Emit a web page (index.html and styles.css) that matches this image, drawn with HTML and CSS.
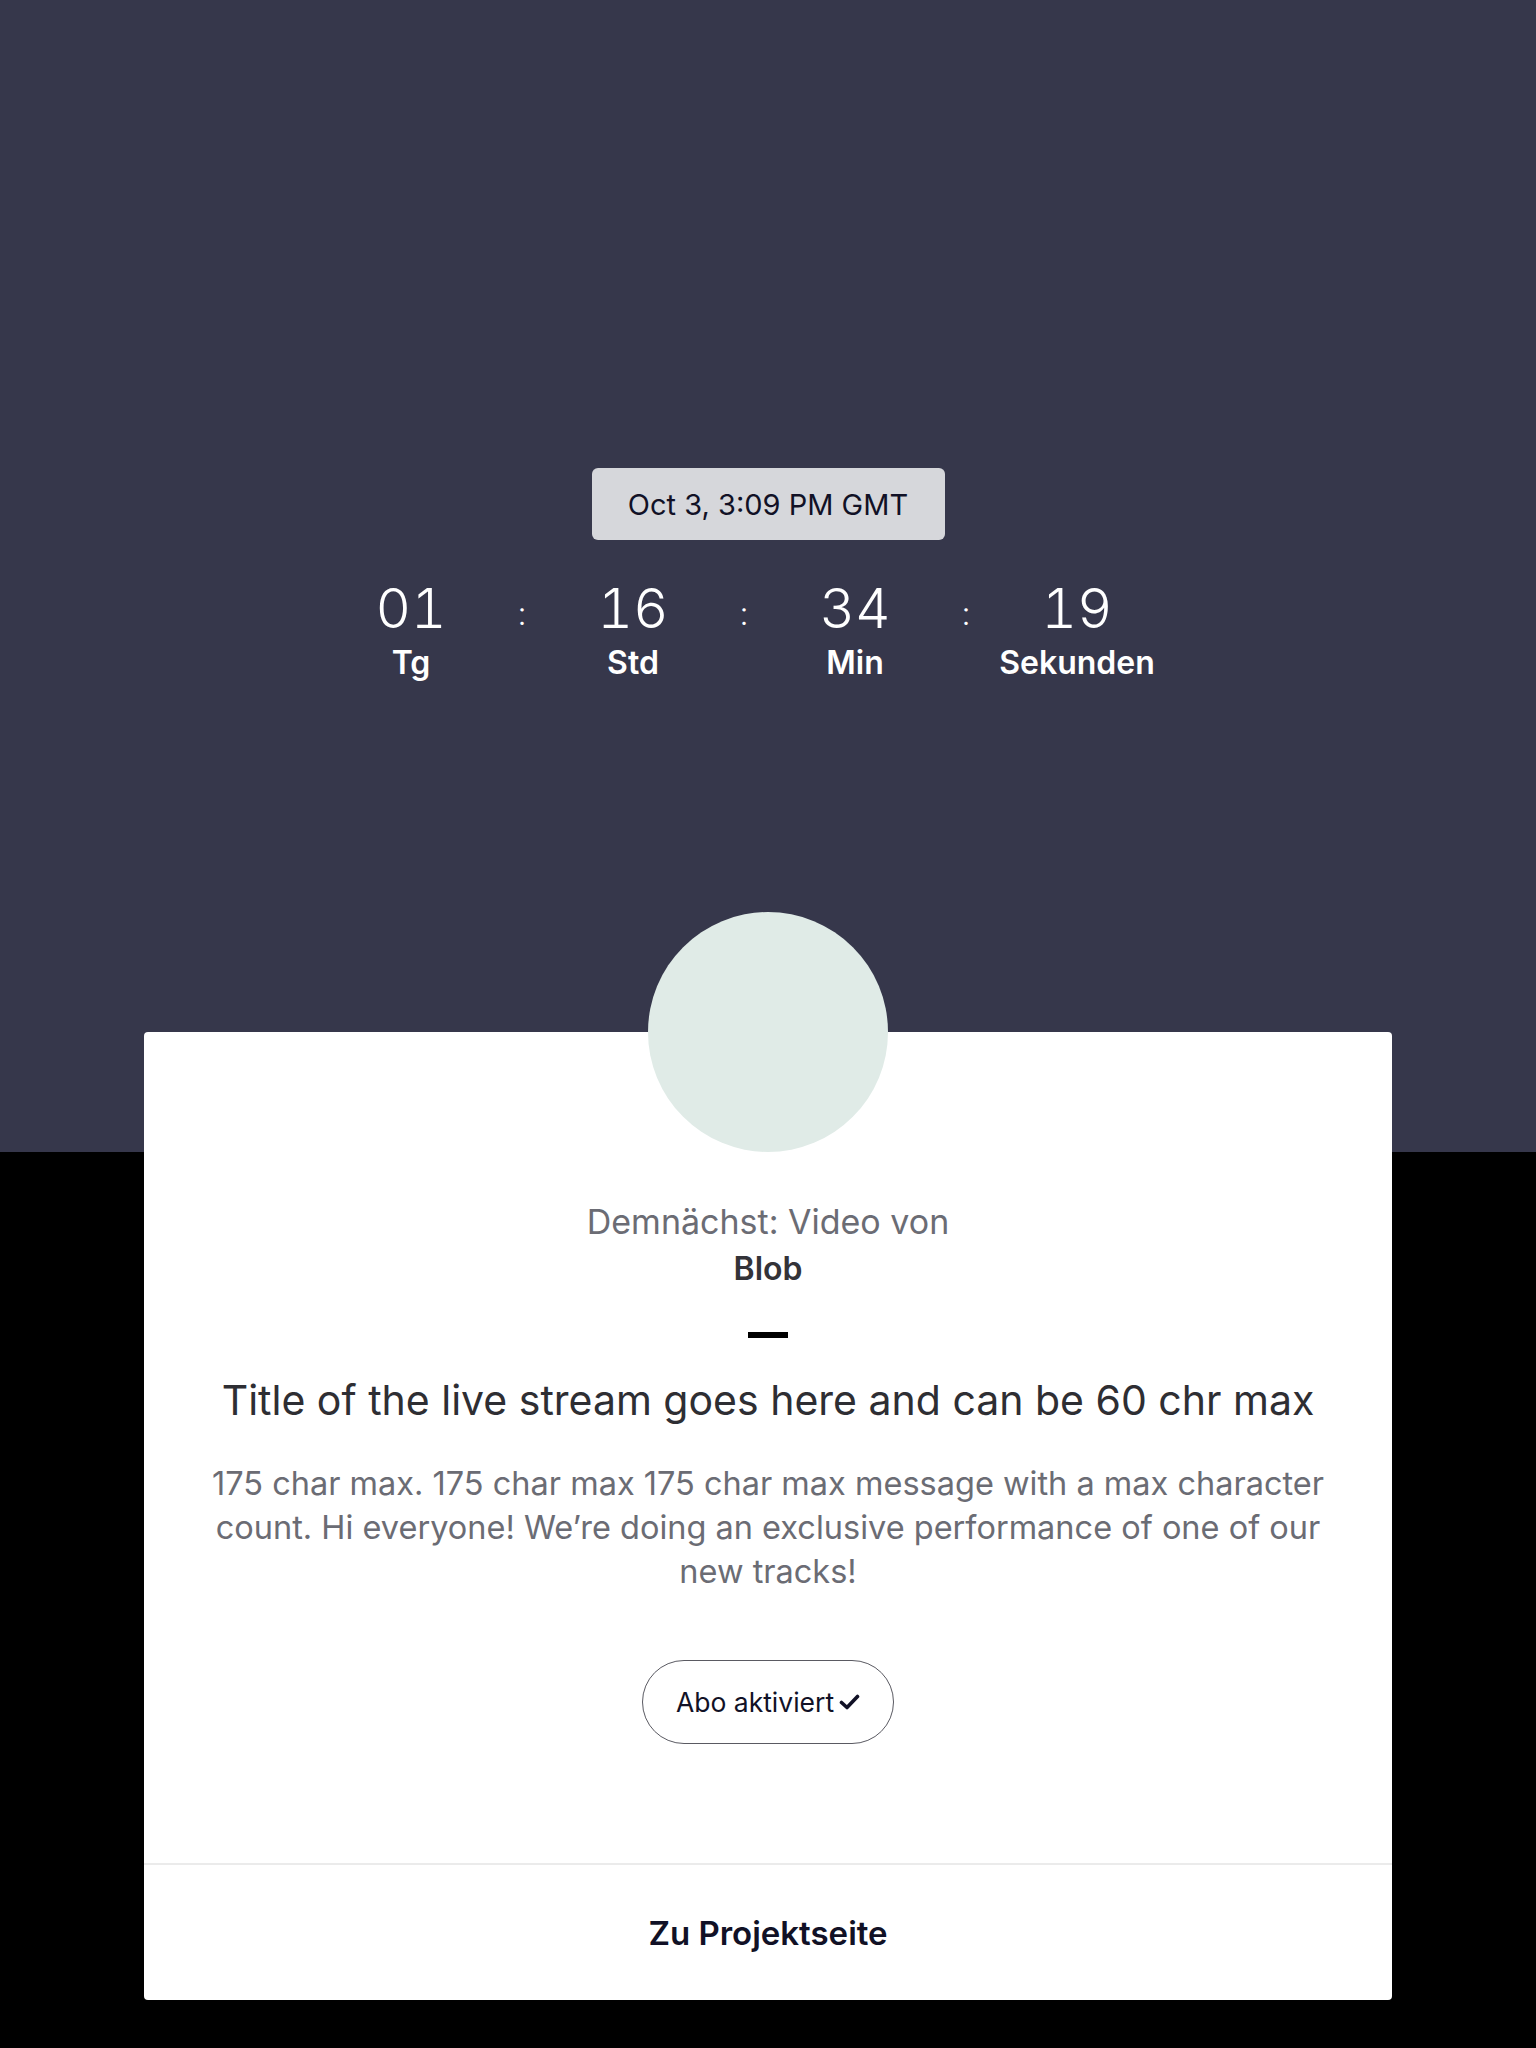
FILE: index.html
```html
<!DOCTYPE html>
<html lang="de">
<head>
<meta charset="utf-8">
<title>Demnächst</title>
<link rel="stylesheet" href="styles.css">
</head>
<body>
<section class="hero">
  <div class="pill">Oct 3, 3:09 PM GMT</div>
  <div class="countdown">
    <div class="unit"><span class="num">01</span><span class="lbl">Tg</span></div>
    <div class="sep">:</div>
    <div class="unit"><span class="num">16</span><span class="lbl">Std</span></div>
    <div class="sep">:</div>
    <div class="unit"><span class="num">34</span><span class="lbl">Min</span></div>
    <div class="sep">:</div>
    <div class="unit"><span class="num">19</span><span class="lbl">Sekunden</span></div>
  </div>
</section>
<main class="card">
  <div class="card-body">
    <div class="avatar"></div>
    <p class="kicker">Demnächst: Video von</p>
    <p class="artist">Blob</p>
    <div class="dash"></div>
    <h1 class="title">Title of the live stream goes here and can be 60 chr max</h1>
    <p class="desc">175 char max. 175 char max 175 char max message with a max character count. Hi everyone! We’re doing an exclusive performance of one of our new tracks!</p>
    <button class="sub-btn">Abo aktiviert <svg class="check" viewBox="0 0 20 16" width="21" height="16"><path d="M2 8.5 L7.5 13.5 L18 2.5" fill="none" stroke="#111126" stroke-width="3.6" stroke-linecap="round" stroke-linejoin="round"/></svg></button>
  </div>
  <a class="card-foot" href="#">Zu Projektseite</a>
</main>
</body>
</html>
```
FILE: styles.css
```css
* { box-sizing: border-box; }
html, body { margin: 0; padding: 0; }
body {
  background: #000;
  font-family: Inter, "Noto Sans", "Liberation Sans", sans-serif;
  min-height: 2048px;
}
.hero {
  height: 1152px;
  background: #36374b;
  display: flex;
  flex-direction: column;
  align-items: center;
  padding-top: 468px;
}
.pill {
  width: 353px;
  height: 72px;
  background: #d6d7db;
  border-radius: 6px;
  color: #111126;
  font-size: 29px;
  display: flex;
  align-items: center;
  justify-content: center;
}
.countdown {
  display: flex;
  margin-top: 40px;
  padding-right: 48px;
  color: #fff;
}
.unit {
  width: 160px;
  display: flex;
  flex-direction: column;
  align-items: center;
}
.num {
  font-size: 55px;
  font-weight: 300;
  line-height: 56px;
  font-variant-numeric: tabular-nums;
}
.lbl {
  font-size: 32px;
  font-weight: 600;
  line-height: 40px;
  margin-top: 7px;
}
.sep {
  width: 62px;
  text-align: center;
  font-size: 32px;
  font-weight: 300;
  line-height: 56px;
  padding-top: 6px;
}
.card {
  width: 1248px;
  margin: -120px auto 0;
  background: #fff;
  border-radius: 4px;
  display: flex;
  flex-direction: column;
}
.card-body {
  display: flex;
  flex-direction: column;
  align-items: center;
  padding: 0 60px 119px;
  border-bottom: 2px solid #ebebeb;
}
.avatar {
  width: 240px;
  height: 240px;
  border-radius: 50%;
  background: #e0ebe7;
  margin-top: -120px;
}
.kicker {
  margin: 48px 0 0;
  font-size: 34px;
  line-height: 44px;
  color: #6b6c74;
}
.artist {
  margin: 3px 0 0;
  font-size: 32px;
  font-weight: 600;
  line-height: 44px;
  color: #333338;
}
.dash {
  width: 40px;
  height: 6px;
  background: #000;
  margin-top: 41px;
}
.title {
  margin: 36px 0 0;
  font-size: 41px;
  font-weight: 400;
  line-height: 52px;
  color: #2e2e33;
  text-align: center;
}
.desc {
  margin: 36px 0 0;
  font-size: 32.5px;
  line-height: 44px;
  color: #6b6c74;
  text-align: center;
}
.sub-btn {
  margin-top: 66px;
  width: 252px;
  height: 84px;
  border-radius: 42px;
  border: 1.5px solid #5a5a62;
  background: #fff;
  font-family: inherit;
  font-size: 26.5px;
  color: #111126;
  display: flex;
  align-items: center;
  justify-content: center;
  gap: 5px;
  padding: 0;
}
.check { display: block; }
.card-foot {
  height: 135px;
  display: flex;
  align-items: center;
  justify-content: center;
  font-size: 33px;
  font-weight: 600;
  color: #111126;
  text-decoration: none;
}
```
